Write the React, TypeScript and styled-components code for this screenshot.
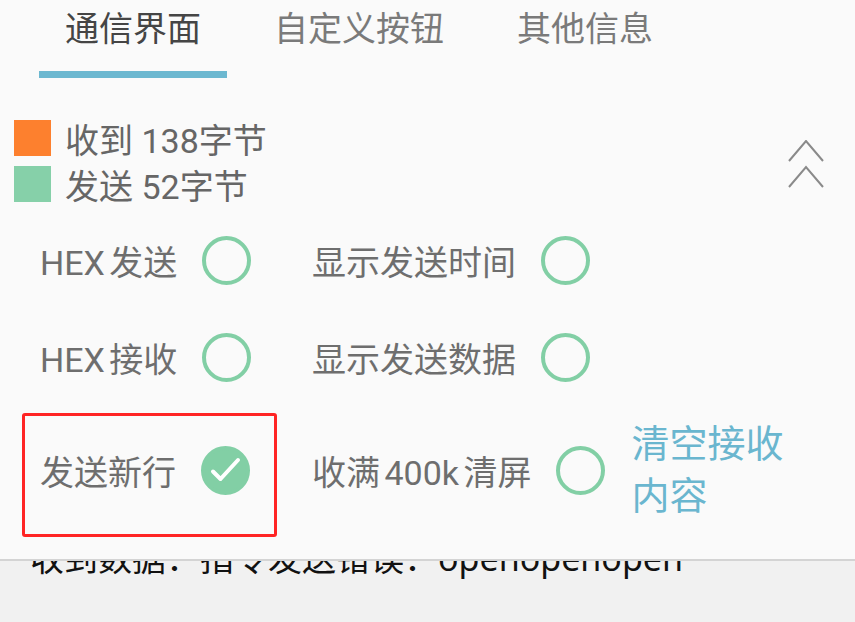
import React from 'react';
import styled, { createGlobalStyle } from 'styled-components';

const GlobalStyle = createGlobalStyle`
    body {
        margin: 0;
        background: #fafafa;
        font-family: Roboto, "Noto Sans CJK SC", sans-serif;
    }
`;

const Screen = styled.div`
    width: 855px;
    height: 622px;
    overflow: hidden;
    display: flex;
    flex-direction: column;
    background: #f1f1f1;
`;

const Panel = styled.div`
    height: 561px;
    box-sizing: border-box;
    background: #fafafa;
    border-bottom: 2px solid #d4d4d4;
    display: flex;
    flex-direction: column;
`;

const TabBar = styled.div`
    display: flex;
    gap: 21px;
    padding-left: 39px;
    height: 78px;
`;

const Tab = styled.div<{ $active?: boolean }>`
    box-sizing: border-box;
    height: 78px;
    padding: 7px 26px 0;
    font-size: 34px;
    line-height: 44px;
    color: ${p => (p.$active ? '#454545' : '#7a7a7a')};
    border-bottom: 7px solid ${p => (p.$active ? '#6cb8d0' : 'transparent')};
`;

const StatsRow = styled.div`
    display: flex;
    justify-content: space-between;
    align-items: flex-start;
    padding: 37px 31px 0 14px;
`;

const Legend = styled.div`
    display: flex;
    flex-direction: column;
`;

const LegendItem = styled.div`
    display: flex;
    align-items: center;
    gap: 14px;
    height: 46px;
    font-size: 34px;
    color: #666;
`;

const Swatch = styled.span<{ $color: string }>`
    width: 37px;
    height: 36px;
    background: ${p => p.$color};
`;

const Collapse = styled.svg`
    margin-top: 25px;
`;

const Options = styled.div`
    display: flex;
    flex-direction: column;
    margin-top: 5px;
`;

const Row = styled.div<{ $height: number }>`
    display: flex;
    align-items: center;
    height: ${p => p.$height}px;
    padding-left: 40px;
`;

const Cell = styled.div<{ $first?: boolean; $marked?: boolean }>`
    position: relative;
    display: flex;
    align-items: center;
    gap: 25px;
    width: ${p => (p.$first ? '272px' : 'auto')};
    flex-shrink: 0;

    ${p =>
        p.$marked &&
        `
        &::after {
            content: '';
            position: absolute;
            left: -18px;
            width: 249px;
            top: -33px;
            height: 118px;
            border: 3px solid #ff2424;
            border-radius: 3px;
        }
    `}
`;

const Label = styled.span`
    font-size: 34px;
    word-spacing: -4px;
    color: #6e6e6e;
    white-space: nowrap;
`;

const Radio = styled.span<{ $checked?: boolean }>`
    box-sizing: border-box;
    width: 49px;
    height: 49px;
    border-radius: 50%;
    border: 4px solid #82cfa5;
    background: ${p => (p.$checked ? '#82cfa5' : 'transparent')};
    display: flex;
    align-items: center;
    justify-content: center;
    flex-shrink: 0;
`;

const ClearBtn = styled.span`
    margin-left: 26px;
    font-size: 38px;
    line-height: 52px;
    color: #6ab6cf;
    width: 160px;
`;

const Log = styled.div`
    flex: 1;
    overflow: hidden;
    padding-left: 30px;
`;

const LogLine = styled.div`
    margin-top: -23px;
    font-family: "Noto Sans", "Noto Sans CJK SC", sans-serif;
    font-size: 34px;
    line-height: 40px;
    color: #111;
    white-space: nowrap;
`;

type OptionProps = { label: string; checked?: boolean; first?: boolean; marked?: boolean };

function Option({ label, checked, first, marked }: OptionProps) {
    return (
        <Cell $first={first} $marked={marked}>
            <Label>{label}</Label>
            <Radio $checked={checked}>
                {checked && (
                    <svg width="41" height="41" viewBox="0 0 41 41">
                        <polyline
                            points="8,21.5 15.5,29 33,10"
                            fill="none"
                            stroke="#fff"
                            strokeWidth="4"
                            strokeLinecap="round"
                            strokeLinejoin="round"
                        />
                    </svg>
                )}
            </Radio>
        </Cell>
    );
}

export default function App() {
    const tabs = ['通信界面', '自定义按钮', '其他信息'];
    return (
        <>
            <GlobalStyle />
            <Screen>
                <Panel>
                    <TabBar>
                        {tabs.map((t, i) => (
                            <Tab key={t} $active={i === 0}>
                                {t}
                            </Tab>
                        ))}
                    </TabBar>
                    <StatsRow>
                        <Legend>
                            <LegendItem>
                                <Swatch $color="#fd802e" />
                                收到 138字节
                            </LegendItem>
                            <LegendItem>
                                <Swatch $color="#86d0a9" />
                                发送 52字节
                            </LegendItem>
                        </Legend>
                        <Collapse width="36" height="50" viewBox="0 0 36 50">
                            <polyline points="1,21 18,1 35,21" fill="none" stroke="#8a8a8a" strokeWidth="2" />
                            <polyline points="1,47 18,27 35,47" fill="none" stroke="#8a8a8a" strokeWidth="2" />
                        </Collapse>
                    </StatsRow>
                    <Options>
                        <Row $height={97}>
                            <Option first label="HEX 发送" />
                            <Option label="显示发送时间" />
                        </Row>
                        <Row $height={97}>
                            <Option first label="HEX 接收" />
                            <Option label="显示发送数据" />
                        </Row>
                        <Row $height={128}>
                            <Option first marked checked label="发送新行" />
                            <Option label="收满 400k 清屏" />
                            <ClearBtn>清空接收内容</ClearBtn>
                        </Row>
                    </Options>
                </Panel>
                <Log>
                    <LogLine>收到数据：指令发送错误：openopenopen</LogLine>
                </Log>
            </Screen>
        </>
    );
}
